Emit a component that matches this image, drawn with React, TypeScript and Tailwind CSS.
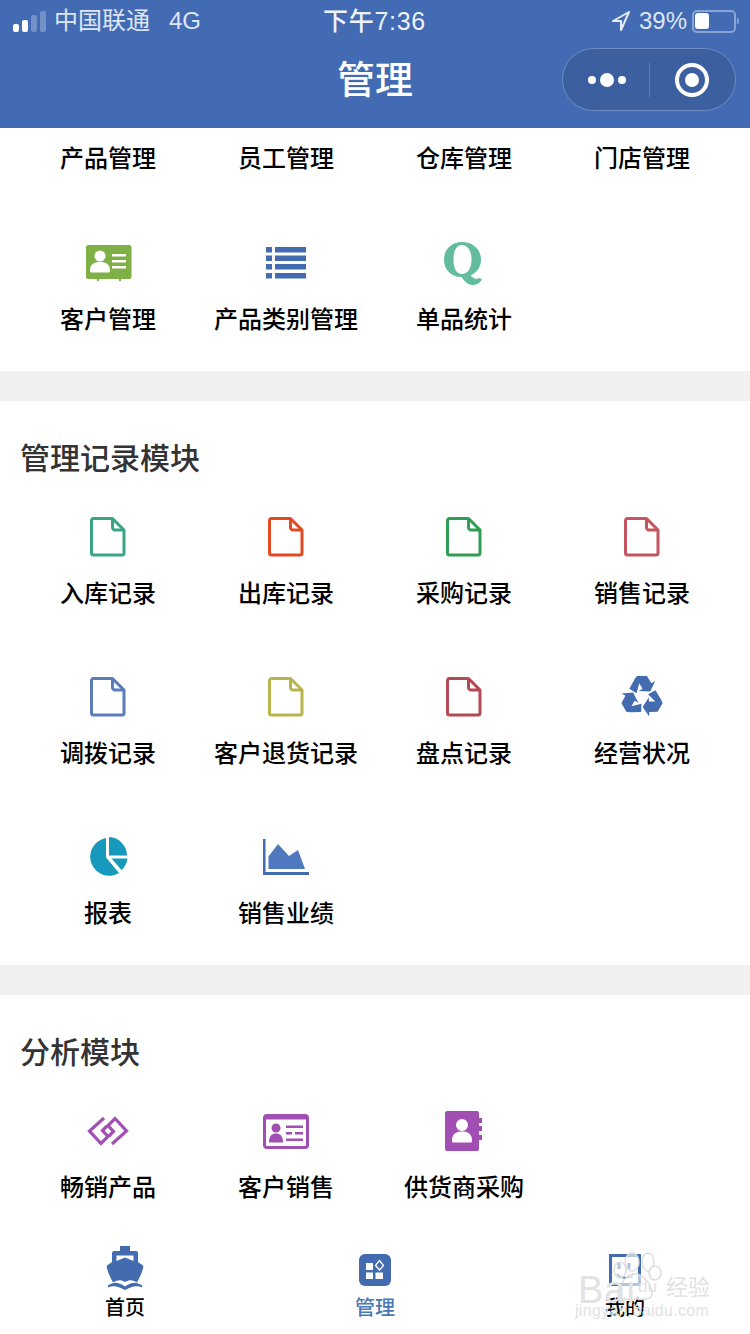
import React from "react";

const FileIcon = ({ c }: { c: string }) => (
  <svg width="36" height="40" viewBox="0 0 36 40" fill="none" stroke={c} strokeWidth="3" strokeLinejoin="round">
    <path d="M3.500 1.500H22.500L34 13V36a2 2 0 0 1-2 2H3.500a2 2 0 0 1-2-2V3.500a2 2 0 0 1 2-2Z" />
    <path d="M22.500 1.500V10.500a2.500 2.500 0 0 0 2.500 2.500H34" />
  </svg>
);

const CardGreen = () => (
  <svg width="47" height="36" viewBox="0 0 47 36">
    <path d="M3 0H44a2.500 2.500 0 0 1 2.500 2.500V32a2 2 0 0 1-2 2H36V36H34V34H14V36H12V34H3a2 2 0 0 1-2-2V2.500A2.500 2.500 0 0 1 3 0Z" fill="#7fb045" />
    <circle cx="15" cy="11" r="5.500" fill="#fff" />
    <path d="M5 26c0-7 4-9 10-9s10 2 10 9a1.500 1.500 0 0 1-1.500 1.500H6.500A1.500 1.500 0 0 1 5 26Z" fill="#fff" />
    <path d="M27 9H41V11.500H27ZM27 15H41V17.500H27ZM27 21H41V23.500H27Z" fill="#fff" />
  </svg>
);

const ListIcon = () => (
  <svg width="42" height="34" viewBox="0 0 42 34" fill="#436bb0">
    <path d="M1 1H7V6.500H1ZM10 1H41V6.500H10ZM1 9.500H7V15H1ZM10 9.500H41V15H10ZM1 18H7V23.500H1ZM10 18H41V23.500H10ZM1 27H7V32.500H1ZM10 27H41V32.500H10Z" />
  </svg>
);

const QIcon = () => (
  <svg width="42" height="44" viewBox="0 0 42 44" fill="#63bd9c">
    <path fillRule="evenodd" d="M19 1C30 1 38 8.500 38 18.500 38 26 34 31.500 27.500 34.500 30 37.500 33 38.500 36.500 37L39 38.500C36.500 42.500 33 44 29.500 44 24.500 44 21.500 40 18.500 36 8 36 1 28.500 1 18.500S8.500 1 19 1ZM19 4C13.500 4 10.500 9.500 10.500 18.500S13.500 33 19 33 28.500 27.500 28.500 18.500 24.500 4 19 4Z" />
  </svg>
);

const RecycleIcon = () => {
  const d = "M8.500 13.500 13.500 4.500 15.500 2H24.500L28.500 8.500 32 6.500 27.500 16 17 15.500 20.500 13.500 17.500 8.500 15 17.500Z";
  return (
    <svg width="44" height="44" viewBox="0 0 40 40" fill="#436bb0" className="-my-[2px]">
      <g transform="translate(0 -1)">
        <path d={d} />
        <path d={d} transform="rotate(120 20 21)" />
        <path d={d} transform="rotate(240 20 21)" />
      </g>
    </svg>
  );
};

const PieIcon = () => (
  <svg width="40" height="40" viewBox="0 0 40 40" fill="#1699bc">
    <path d="M18 1V20.500L31 36A19 19 0 1 1 18 1Z" />
    <path d="M21 0A19 19 0 0 1 39 18.500H21Z" />
    <path d="M23.500 21.500H39.500A19 19 0 0 1 33.500 33Z" />
  </svg>
);

const AreaIcon = () => (
  <svg width="46" height="36" viewBox="0 0 46 36">
    <path d="M0 0H2.500V33H46V36H0Z" fill="#436bb0" />
    <path d="M5.500 30V17.500L15 5 26 17 35 11 42 30Z" fill="#4f78bf" />
  </svg>
);

const LinkIcon = () => (
  <svg width="42" height="30" viewBox="0 0 42 30" fill="none" stroke="#a14fb3" strokeWidth="3.200" strokeLinejoin="miter">
    <path d="M17 2 2.500 15 14 27.500 21 20.500 15.500 14.500 20 10" />
    <path d="M25 28 39.500 15 28 2.500 21 9.500 26.500 15.500 22 20" />
  </svg>
);

const CardPurple = () => (
  <svg width="46" height="35" viewBox="0 0 46 35">
    <rect x="1.500" y="1.500" width="43" height="32" rx="2.500" fill="#fff" stroke="#a14fb3" strokeWidth="3" />
    <rect x="1.500" y="1.500" width="43" height="4" fill="#a14fb3" />
    <circle cx="13" cy="14" r="4.500" fill="#a14fb3" />
    <path d="M6 28c0-6 3-8.500 7-8.500s7 2.500 7 8.500a.5.5 0 0 1-.5.5h-13a.5.5 0 0 1-.5-.5Z" fill="#a14fb3" />
    <path d="M23 11.500H40V14H23ZM23 18H29V20.500H23ZM32 18H40V20.500H32ZM23 24.500H40V27H23Z" fill="#a14fb3" />
  </svg>
);

const BookIcon = () => (
  <svg width="38" height="40" viewBox="0 0 38 40">
    <path d="M2 0H32a2 2 0 0 1 2 2V7H37V12H34V15H37V20H34V24H37V29H34V38a2 2 0 0 1-2 2H2a2 2 0 0 1-2-2V2a2 2 0 0 1 2-2Z" fill="#a14fb3" />
    <circle cx="17" cy="14" r="6" fill="#fff" />
    <path d="M7 30c0-7 3.500-9.500 10-9.500s10 2.500 10 9.500a1.500 1.500 0 0 1-1.500 1.500h-17A1.500 1.500 0 0 1 7 30Z" fill="#fff" />
  </svg>
);

const ShipIcon = () => (
  <svg width="38" height="44" viewBox="0 0 38 44" fill="#436bb0" className="-mt-[3px]">
    <path fillRule="evenodd" d="M14 0H24V5H30a2 2 0 0 1 2 2V16L37 19.500C38 21 36 27 31 36.500 26 33.500 23 33.500 19 36 15 33.500 12 33.500 7 36.500 2 27 0 21 1 19.500L6 16V7a2 2 0 0 1 2-2H14ZM10.500 9.500V15L19 11.500 27.500 15V9.500Z" />
    <path d="M2 39.500C8 35.500 12 36 19 40.500 26 36 30 35.500 36 39.500V41.500C31 39 26 40 19 44 12 40 7 39 2 41.500Z" />
  </svg>
);

const ManageIcon = () => (
  <svg width="32" height="32" viewBox="0 0 32 32">
    <rect width="32" height="32" rx="6" fill="#436bb0" />
    <path d="M7 10H14V17H7ZM7 19.500H14V26H7ZM16.500 19.500H24V26H16.500Z" fill="#fff" transform="translate(0 -1)" />
    <path d="M20.500 6.500 24.500 11.500 20.500 16 16.500 11.500Z" fill="none" stroke="#fff" strokeWidth="1.300" />
  </svg>
);

const MeIcon = () => (
  <svg width="32" height="32" viewBox="0 0 32 32" fill="none">
    <rect x="1.500" y="1.500" width="29" height="29" stroke="#436bb0" strokeWidth="3" />
    <path d="M10 9V15M20 9V15" stroke="#436bb0" strokeWidth="3" />
    <path d="M8 20C12 25 20 25 24 20" stroke="#436bb0" strokeWidth="2" />
  </svg>
);

const Paw = () => (
  <svg width="60" height="60" viewBox="0 0 60 60" fill="#fff" fillOpacity=".6" stroke="#dedede" strokeWidth="1.500">
    <ellipse cx="10" cy="20" rx="6" ry="8" />
    <ellipse cx="22" cy="12" rx="7" ry="9" />
    <ellipse cx="38" cy="12" rx="6" ry="9" />
    <ellipse cx="45" cy="23" rx="6" ry="7" />
    <path d="M25 24C34 24 42 36 42 43 42 51 32 49 25 49 18 49 8 51 8 43 8 36 16 24 25 24Z" />
  </svg>
);

type Item = { label: string; icon?: React.ReactNode };

const Grid = ({ items, gap = "gap-y-[64px]" }: { items: Item[]; gap?: string }) => (
  <div className={`grid grid-cols-4 px-[19px] ${gap}`}>
    {items.map((it) => (
      <div key={it.label} className="flex flex-col items-center">
        {it.icon && <div className="flex h-[64px] w-full items-center justify-center pb-[16px]">{it.icon}</div>}
        <span className="h-[32px] whitespace-nowrap text-[24px] leading-[34px] font-medium text-black">{it.label}</span>
      </div>
    ))}
  </div>
);

const Section = ({ title, items }: { title: string; items: Item[] }) => (
  <section className="bg-white">
    <h2 className="h-[76px] pt-[40px] pl-[20px] text-[30px] leading-[36px] font-medium text-[#333]">{title}</h2>
    <div className="pt-[36px] pb-[36px]">
      <Grid items={items} />
    </div>
  </section>
);

const Tab = ({ label, icon, active }: { label: string; icon: React.ReactNode; active?: boolean }) => (
  <div className="flex flex-col items-center">
    <div className="flex h-[47px] items-center">{icon}</div>
    <span className={`text-[20px] leading-[30px] font-medium ${active ? "text-[#4c78b4]" : "text-black"}`}>{label}</span>
  </div>
);

export default function App() {
  return (
    <div className="relative flex h-[1334px] w-[750px] flex-col overflow-hidden bg-white font-['Liberation_Sans','Noto_Sans_CJK_SC',sans-serif]">
      <header className="h-[128px] shrink-0 bg-[#436bb3] text-white">
        <div className="relative flex h-[42px] items-center justify-between pl-[13px] pr-[14px] text-[24px]">
          <div className="flex items-center">
            <div className="flex items-end gap-[3px]">
              <span className="h-[8px] w-[6px] rounded-[2px] bg-white" />
              <span className="h-[12px] w-[6px] rounded-[2px] bg-white" />
              <span className="h-[17px] w-[6px] rounded-[2px] bg-[#7391c6]" />
              <span className="h-[21px] w-[6px] rounded-[2px] bg-[#7391c6]" />
            </div>
            <span className="ml-[8px] text-[#dfe6f3]">中国联通</span>
            <span className="ml-[19px] text-[#dfe6f3]">4G</span>
          </div>
          <span className="absolute left-[323px] top-[3px] text-[25px] font-medium tracking-[.7px] text-[#eef2f9]">下午7:36</span>
          <div className="flex items-center">
            <svg width="20" height="22" viewBox="0 0 20 22" fill="none" stroke="#e6ecf6" strokeWidth="2" className="-ml-[2px]">
              <path d="M18 2 2 11H10V20Z" strokeLinejoin="round" />
            </svg>
            <span className="ml-[8px] text-[#dfe6f3]">39%</span>
            <div className="relative ml-[5px] flex h-[23px] w-[44px] items-center rounded-[5px] border-[2px] border-[#8aa4d3] pl-[1px]">
              <span className="h-[16px] w-[14px] rounded-[3px] bg-white" />
              <span className="absolute right-[-5px] h-[6px] w-[2px] rounded-r bg-[#8aa4d3]" />
            </div>
          </div>
        </div>
        <div className="relative flex h-[86px] items-start justify-center">
          <span className="mt-[13px] text-[38px] leading-[50px] font-medium">管理</span>
          <div className="absolute right-[14px] top-[6px] flex h-[63px] w-[174px] items-center rounded-full border border-[#6d8cc4] bg-[#3b5f9f]">
            <div className="flex w-[86px] items-center justify-center gap-[4px] pl-[2px]">
              <span className="h-[8px] w-[8px] rounded-full bg-white" />
              <span className="h-[14px] w-[14px] rounded-full bg-white" />
              <span className="h-[8px] w-[8px] rounded-full bg-white" />
            </div>
            <div className="h-[34px] w-px bg-[#6281b8]" />
            <div className="flex flex-1 items-center justify-center pr-[2px]">
              <div className="flex h-[34px] w-[34px] items-center justify-center rounded-full border-[4px] border-white">
                <span className="h-[14px] w-[14px] rounded-full bg-white" />
              </div>
            </div>
          </div>
        </div>
      </header>

      <main className="min-h-0 flex-1 overflow-hidden">
        <section className="bg-white pt-[14px] pb-[36px]">
          <Grid
            gap="gap-y-[65px]"
            items={[
              { label: "产品管理" },
              { label: "员工管理" },
              { label: "仓库管理" },
              { label: "门店管理" },
              { label: "客户管理", icon: <CardGreen /> },
              { label: "产品类别管理", icon: <ListIcon /> },
              { label: "单品统计", icon: <QIcon /> },
            ]}
          />
        </section>
        <div className="h-[30px] bg-[#f0f0f0]" />
        <Section
          title="管理记录模块"
          items={[
            { label: "入库记录", icon: <FileIcon c="#39a585" /> },
            { label: "出库记录", icon: <FileIcon c="#e14b24" /> },
            { label: "采购记录", icon: <FileIcon c="#2f9e54" /> },
            { label: "销售记录", icon: <FileIcon c="#c4565f" /> },
            { label: "调拨记录", icon: <FileIcon c="#5b7cb8" /> },
            { label: "客户退货记录", icon: <FileIcon c="#b8b54e" /> },
            { label: "盘点记录", icon: <FileIcon c="#b34a55" /> },
            { label: "经营状况", icon: <RecycleIcon /> },
            { label: "报表", icon: <PieIcon /> },
            { label: "销售业绩", icon: <AreaIcon /> },
          ]}
        />
        <div className="h-[30px] bg-[#f0f0f0]" />
        <Section
          title="分析模块"
          items={[
            { label: "畅销产品", icon: <LinkIcon /> },
            { label: "客户销售", icon: <CardPurple /> },
            { label: "供货商采购", icon: <BookIcon /> },
          ]}
        />
      </main>

      <nav className="absolute bottom-0 left-0 grid h-[94px] w-full grid-cols-3 bg-white pt-[6px]">
        <Tab label="首页" icon={<ShipIcon />} />
        <Tab label="管理" icon={<ManageIcon />} active />
        <Tab label="我的" icon={<MeIcon />} />
      </nav>

      <div className="pointer-events-none absolute left-[578px] top-[1250px] h-[80px] w-[140px] text-[#e2e2e2]">
        <div className="absolute left-[32px] top-0">
          <Paw />
        </div>
        <span className="absolute left-0 top-[20px] text-[38px] leading-[40px] tracking-[1px]">Bai</span>
        <span className="absolute left-[60px] top-[28px] text-[17px] leading-[18px]">du</span>
        <span className="absolute left-[88px] top-[25px] text-[22px] leading-[26px]">经验</span>
        <span className="absolute left-[-3px] top-[52px] text-[16px] leading-[18px] tracking-[.3px]">jingyan.baidu.com</span>
      </div>
    </div>
  );
}
